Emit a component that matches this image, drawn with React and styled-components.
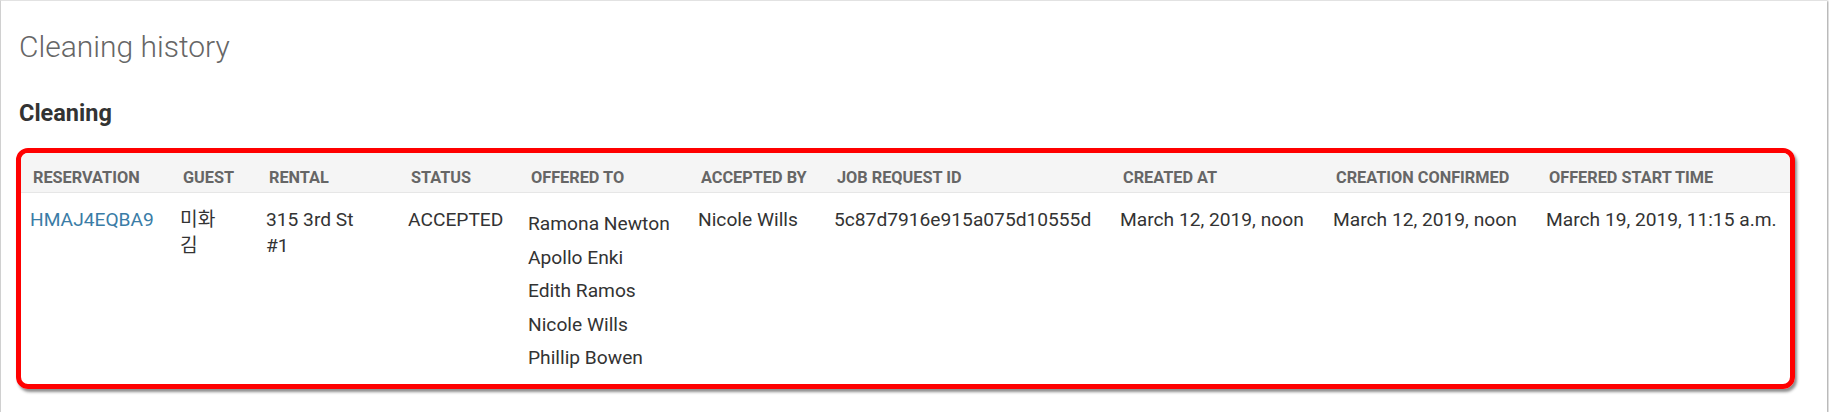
import * as React from "react";
import styled, { createGlobalStyle } from "styled-components";

const GlobalStyle = createGlobalStyle`
  html, body {
    margin: 0;
    padding: 0;
    background: #fff;
  }
  body {
    font-family: Roboto, "Noto Sans CJK KR", "Liberation Sans", sans-serif;
    color: #333;
  }
`;

const columns = [
  { key: "reservation", label: "Reservation", width: "150px" },
  { key: "guest", label: "Guest", width: "86px" },
  { key: "rental", label: "Rental", width: "142px" },
  { key: "status", label: "Status", width: "120px" },
  { key: "offered", label: "Offered to", width: "170px" },
  { key: "accepted", label: "Accepted by", width: "136px" },
  { key: "job", label: "Job request ID", width: "286px" },
  { key: "created", label: "Created at", width: "213px" },
  { key: "confirmed", label: "Creation confirmed", width: "213px" },
  { key: "start", label: "Offered start time", width: "1fr" }
];

const row = {
  reservation: "HMAJ4EQBA9",
  guest: "미화 김",
  rental: "315 3rd St #1",
  status: "ACCEPTED",
  offered: ["Ramona Newton", "Apollo Enki", "Edith Ramos", "Nicole Wills", "Phillip Bowen"],
  accepted: "Nicole Wills",
  job: "5c87d7916e915a075d10555d",
  created: "March 12, 2019, noon",
  confirmed: "March 12, 2019, noon",
  start: "March 19, 2019, 11:15 a.m."
};

const Card = styled.div`
  box-sizing: border-box;
  width: calc(100% - 2px);
  height: 412px;
  border-top: 1px solid #e2e2e2;
  border-left: 1px solid #d0d0d0;
  box-shadow: 1px 1px 2px rgba(0, 0, 0, 0.4);
  padding: 28px 0 0 18px;
`;

const Title = styled.h1`
  margin: 0;
  font-size: 30px;
  line-height: 36px;
  font-weight: 300;
  color: #666;
`;

const Subtitle = styled.h2`
  margin: 34px 0 0;
  font-size: 23.5px;
  line-height: 28px;
  font-weight: 700;
  color: #333;
`;

const Highlight = styled.div`
  box-sizing: border-box;
  width: 1779px;
  height: 241px;
  margin: 21px 0 0 -3px;
  border: 5px solid #ff0000;
  border-radius: 12px;
  box-shadow: 2px 3px 3px rgba(0, 0, 0, 0.45);
  overflow: hidden;
`;

const Grid = styled.div`
  display: grid;
  grid-template-columns: ${props => props.$template};
`;

const HeadCell = styled.div`
  height: 40px;
  box-sizing: border-box;
  padding: 15px 0 0 12px;
  background: #f5f5f5;
  border-bottom: 1px solid #e6e6e6;
  font-size: 16.3px;
  line-height: 19px;
  font-weight: 700;
  color: #666;
  text-transform: uppercase;
  white-space: nowrap;
`;

const Cell = styled.div`
  padding: 14px 10px 12px 9px;
  font-size: 19.2px;
  line-height: 26px;
  color: #333;
  white-space: nowrap;
  & > span {
    display: block;
    max-width: ${props => props.$maxWidth || "none"};
    white-space: ${props => (props.$maxWidth ? "normal" : "nowrap")};
  }
`;

const Link = styled.a`
  color: #3a7ca6;
  text-decoration: none;
`;

const NameList = styled.ul`
  list-style: none;
  margin: 0;
  padding: 0;
`;

const NameItem = styled.li`
  line-height: 27.5px;
  padding: 3px 0;
`;

const renderValue = key => {
  if (key === "reservation") return <Link href="#">{row.reservation}</Link>;
  if (key === "offered")
    return (
      <NameList>
        {row.offered.map(name => (
          <NameItem key={name}>{name}</NameItem>
        ))}
      </NameList>
    );
  return <span>{row[key]}</span>;
};

const maxWidths = { guest: "50px", rental: "100px" };

export default function App() {
  const template = columns.map(c => c.width).join(" ");
  return (
    <>
      <GlobalStyle />
      <Card>
        <Title>Cleaning history</Title>
        <Subtitle>Cleaning</Subtitle>
        <Highlight>
          <Grid $template={template}>
            {columns.map(c => (
              <HeadCell key={c.key}>{c.label}</HeadCell>
            ))}
            {columns.map(c => (
              <Cell key={c.key} $maxWidth={maxWidths[c.key]}>
                {renderValue(c.key)}
              </Cell>
            ))}
          </Grid>
        </Highlight>
      </Card>
    </>
  );
}
